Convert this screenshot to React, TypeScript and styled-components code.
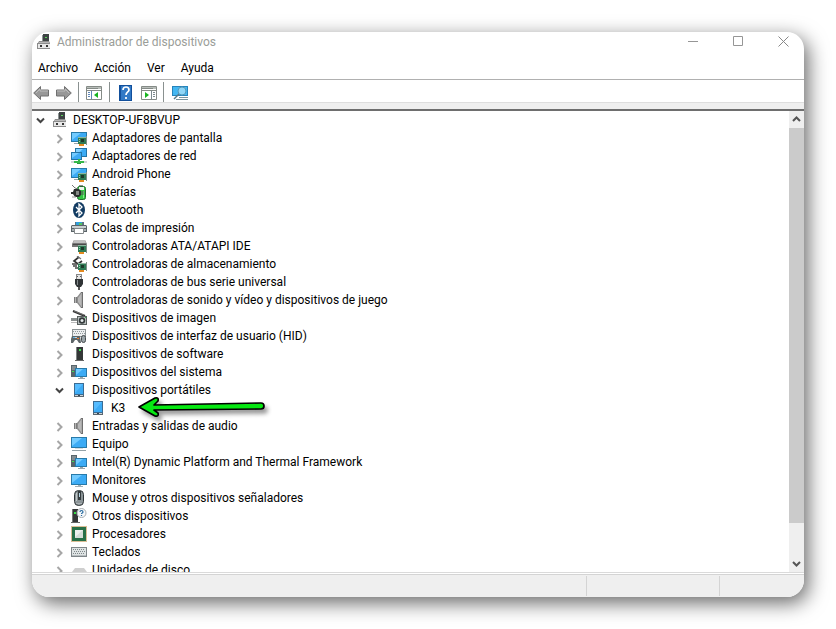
import React, { useState } from "react";
import styled, { createGlobalStyle } from "styled-components";

const GlobalStyle = createGlobalStyle`
  * { box-sizing: border-box; }
  body {
    margin: 0;
    background: #fff;
    color: #000;
    font: 12px/18px Roboto, "Noto Sans", sans-serif;
    overflow: hidden;
  }
  button {
    border: 0;
    padding: 0;
    background: none;
    color: inherit;
    font: inherit;
  }
  svg { display: block; }
`;

const Desktop = styled.div`
  height: 100vh;
  padding: 32px;
  display: flex;
`;
const Window = styled.main`
  flex: 1;
  min-width: 0;
  display: flex;
  flex-direction: column;
  background: #fff;
  border-radius: 17px;
  overflow: hidden;
  box-shadow: 4px 6px 20px rgba(0, 0, 0, 0.6);
`;
const TitleBar = styled.header`
  height: 24px;
  flex: none;
  display: flex;
  align-items: center;
  padding: 0 0 4px 4px;
`;
const Title = styled.h1`
  flex: 1;
  margin: 0 0 0 5px;
  font-size: 12px;
  font-weight: 400;
  color: #9a9d98;
`;
const CaptionButton = styled.button`
  width: 45px;
  height: 20px;
  padding-bottom: 1px;
  display: grid;
  place-items: center;
  &:last-child { width: 41px; margin-left: 2px; }
`;
const MenuBar = styled.nav`
  flex: none;
  height: 24px;
  display: flex;
  align-items: center;
  gap: 16px;
  padding-left: 6px;
  border-bottom: 1px solid #b0b0b0;
`;
const ToolBar = styled.div`
  flex: none;
  height: 23px;
  display: flex;
  align-items: center;
  padding-top: 2px;
  border-bottom: 1px solid #dedede;
`;
const ToolButton = styled.button<{ $wide: number }>`
  width: ${(p) => p.$wide}px;
  padding-top: 1px;
  display: grid;
  place-items: center;
`;
const Separator = styled.span<{ $gap?: number }>`
  width: 1px;
  height: 20px;
  margin-left: ${(p) => p.$gap ?? 0}px;
  background: #8a9190;
`;
const Strip = styled.div`
  flex: none;
  height: 8px;
  background: #efefef;
  border-bottom: 2px solid #6e6e6e;
`;
const Body = styled.section`
  flex: 1;
  min-height: 0;
  display: flex;
`;
const Tree = styled.ul`
  flex: 1;
  min-width: 0;
  margin: 0;
  padding: 0;
  list-style: none;
  overflow: hidden;
`;
const Group = styled.ul`
  margin: 0;
  padding: 0;
  list-style: none;
`;
const Row = styled.div<{ $level: number }>`
  position: relative;
  height: 18px;
  display: flex;
  align-items: center;
  padding-left: ${(p) => p.$level * 19}px;
  white-space: nowrap;
`;
const Expander = styled.button`
  width: 18px;
  height: 18px;
  margin-right: 2px;
  display: grid;
  place-items: center;
  padding-top: 2px;
`;
const ExpanderSpace = styled.span`
  width: 20px;
`;
const Label = styled.span`
  margin-left: 5px;
`;
const Pointer = styled.svg`
  position: absolute;
  left: 103px;
  top: -5px;
  z-index: 1;
  filter: drop-shadow(3px 4px 2px rgba(0, 0, 0, 0.4));
`;
const ScrollBar = styled.div`
  flex: none;
  width: 15px;
  display: flex;
  flex-direction: column;
  background: #efefef;
`;
const ScrollButton = styled.button`
  flex: none;
  height: 17px;
  display: grid;
  place-items: center;
`;
const Track = styled.div`
  flex: 1;
`;
const Thumb = styled.div`
  height: 92.5%;
  background: #cbcbcb;
`;
const StatusBar = styled.footer`
  flex: none;
  height: 25px;
  display: flex;
  padding: 1px 0;
  background: linear-gradient(#dadada 1px, #fff 1px, #fff 2px, #d4d4d4 2px, #d4d4d4 3px, #efefef 3px);
`;
const StatusCell = styled.div<{ $width?: number }>`
  flex: ${(p) => (p.$width ? `0 0 ${p.$width}px` : "1")};
  margin-top: 3px;
  border-right: 1px solid #d4d4d4;
  &:last-child { border-right: 0; }
`;

function Svg({ children }: { children: React.ReactNode }) {
  return <svg width="16" height="16" viewBox="0 0 16 16" aria-hidden="true">{children}</svg>;
}

const screen = "#3cabf5";

const Card = () => (
  <>
    <path d="M7 7h9v7H7z" fill="#2f7a55" />
    <path d="M7 7h8v1H7z" fill="#8fb5a0" />
    <path d="M15 6h1v9h-1z" fill="#7f8f88" />
    <path d="M8 14h5v2H8z" fill="#e48a20" />
    <path d="M10 9h3v3h-3z" fill="#1d3a2a" />
    <path d="M8 9h1v1H8zM8 11h1v1H8z" fill="#8fd0a8" />
  </>
);

const Speaker = () => (
  <Svg>
    <path d="M3 5h4v6H3z" fill="#7b7b7b" />
    <path d="M4 5h1v6H4z" fill="#b5b5b5" />
    <path d="M6 5l4-5h2v16h-2l-4-5z" fill="#8d8d8d" />
    <path d="M7 6l3-4v12l-3-4z" fill="#b8b8b8" />
    <path d="M10 0h2v16h-2z" fill="#6f6f6f" />
    <path d="M10 1h1v14h-1z" fill="#a9a9a9" />
  </Svg>
);
const Portable = () => (
  <Svg>
    <path d="M3 1h10v14H3z" fill="#3c6c93" />
    <path d="M4 2h8v10H4z" fill={screen} />
    <path d="M4 2h8L4 11z" fill="#56bcff" />
    <path d="M3 13h10v2H3z" fill="#5c666e" />
    <path d="M4 13h8v1H4z" fill="#c9d3d9" />
    <path d="M7 13h2v1H7z" fill="#39454f" />
  </Svg>
);
const SystemIcon = () => (
  <Svg>
    <path d="M0 1h6v12H0z" fill="#59656b" />
    <path d="M1 3h4M1 5h4" stroke="#aeb7ba" />
    <path d="M1 7h2v1H1z" fill="#3ddc54" />
    <path d="M4 4h12v9H4z" fill="#287aa9" />
    <path d="M5 5h10v7H5z" fill={screen} />
    <path d="M5 5h7l-7 6z" fill="#72cbff" />
    <path d="M9 13h3v1H9zM7 14h7v1H7z" fill="#99a5ab" />
  </Svg>
);
const DisplayCard = () => (
  <Svg>
    <path d="M0 2h16v10H0z" fill="#287aa9" />
    <path d="M1 3h14v8H1z" fill={screen} />
    <path d="M1 3h9l-9 7z" fill="#72cbff" />
    <path d="M3 13h4v1H3z" fill="#9aa5aa" />
    <Card />
  </Svg>
);

const ICONS: Record<string, () => React.JSX.Element> = {
  computer: () => (
    <Svg>
      <path d="M7 0h6v8H7z" fill="#3d4343" />
      <path d="M6 1h1v7H6z" fill="#8d9494" />
      <path d="M9 3h2v1H9z" fill="#5ed55e" />
      <path d="M3 7h10l1 2v6H1V9h1z" fill="#8c8c8c" />
      <path d="M3 8h10v1H3z" fill="#b8b8b8" />
      <path d="M2 10h12v4H2z" fill="#e8e8e8" />
      <path d="M4 11h2v2H4zM10 11h2v2h-2z" fill="#343434" />
    </Svg>
  ),
  display: DisplayCard,
  network: () => (
    <Svg>
      <path d="M4 0h12v9H4z" fill="#2475a5" />
      <path d="M5 1h10v7H5z" fill={screen} />
      <path d="M5 1h7L5 7z" fill="#83d2ff" />
      <path d="M0 4h11v8H0z" fill="#2475a5" />
      <path d="M1 5h9v6H1z" fill={screen} />
      <path d="M1 5h7l-7 5z" fill="#72cbff" />
      <path d="M7 11h2v2h4v2H3v-2h4z" fill="#35b94a" />
      <path d="M6 15h4v1H6z" fill="#2b9b3b" />
      <path d="M0 14h3m10 0h3" stroke="#a1adb1" />
    </Svg>
  ),
  battery: () => (
    <Svg>
      <path d="M8 1h4v2H8z" fill="#8b8f8b" />
      <rect x="6.5" y="2.5" width="8" height="13" rx="2" fill="#31c543" stroke="#236c2e" />
      <path d="M8 3h5v3H8z" fill="#eef3ec" />
      <path d="M12 7h1v7h-1z" fill="#85ec8d" />
      <path d="M1 1l3 3 3 1" fill="none" stroke="#777" />
      <path d="M3 5h5l2 2v4l-2 2H4l-2-3H0V8h2z" fill="#2b302d" />
      <path d="M5 7h3v4H5z" fill="#858985" />
      <path d="M10 8h3M10 10h3" stroke="#555" />
      <path d="M1 13h4" stroke="#999" />
    </Svg>
  ),
  bluetooth: () => (
    <Svg>
      <ellipse cx="8" cy="8" rx="6" ry="8" fill="#123b62" />
      <path d="M5 5l6 6-3 3V2l3 3-6 6" fill="none" stroke="#fff" strokeWidth="1.3" />
    </Svg>
  ),
  printer: () => (
    <Svg>
      <path d="M4 2h9v3H4z" fill="#5e7480" />
      <path d="M5 2h6v3H5z" fill="#319fdc" />
      <path d="M8 3h3v2H8z" fill="#55c560" />
      <path d="M1 5h14l1 1v6H0V6z" fill="#5b6468" />
      <path d="M1 6h14v2H1z" fill="#c9cfd1" />
      <path d="M1 9h2v2H1zM13 9h2v2h-2z" fill="#a9afb1" />
      <path d="M3.5 8.5h9v5h-9z" fill="#fff" stroke="#84898b" />
    </Svg>
  ),
  ata: () => (
    <Svg>
      <path d="M3 2h11l2 4v3H1V6z" fill="#777" />
      <path d="M3 2h11l1 3H2z" fill="#c0c0c0" />
      <path d="M2 6h13v1H2z" fill="#4a4a4a" />
      <Card />
    </Svg>
  ),
  storage: () => (
    <Svg>
      <path d="M8 1L3 5l4 3 4-3" fill="none" stroke="#333" strokeWidth="1.7" />
      <path d="M6 0l4 3" stroke="#777" strokeWidth="1.3" />
      <path d="M1 8h5M2 10h4M4 12h3" stroke="#444" strokeWidth="1.4" />
      <Card />
    </Svg>
  ),
  usb: () => (
    <Svg>
      <path d="M5 0h6v5H5z" fill="#888" />
      <path d="M6 1h4v4H6z" fill="#e5e5e5" />
      <path d="M6 2h1v1H6zM9 2h1v1H9z" fill="#555" />
      <path d="M4 5h8v5l-2 3H6l-2-3z" fill="#303436" />
      <path d="M6 6h1v5H6z" fill="#82888a" />
      <path d="M7 13h2v3H7z" fill="#555" />
    </Svg>
  ),
  speaker: Speaker,
  imaging: () => (
    <Svg>
      <path d="M2 1l12 5" stroke="#333" strokeWidth="2" />
      <path d="M3 1l10 4" stroke="#999" strokeWidth=".6" />
      <path d="M0 8h7v3H0z" fill="#8a8f8f" />
      <path d="M6 6h10v9H6z" fill="#59605f" />
      <path d="M7 7h8v7H7z" fill="#b6bdbd" />
      <circle cx="11" cy="10.5" r="3.2" fill="#343a3b" />
      <circle cx="11" cy="10.5" r="1.5" fill="#e1e7e9" />
      <path d="M0 12.5h6" stroke="#bbb" />
      <path d="M14 7h1v1h-1z" fill="#37b84e" />
    </Svg>
  ),
  hid: () => (
    <Svg>
      <path d="M1 1h14v8H1z" fill="#8d9496" />
      <path d="M2 2h12v6H2z" fill="#eceeef" />
      <path d="M2 3.5h12M3 5.5h11" stroke="#929a9d" strokeDasharray="1 1" />
      <path d="M1 8h8l1 7H8l-2-3H4l-2 3H0v-4z" fill="#5d6568" />
      <rect x="10.5" y="7.5" width="4" height="7" rx="2" fill="#9aa4a8" stroke="#454b4e" />
      <path d="M2 9h2v1H2z" fill="#5ab4e7" />
      <path d="M4 9h2v1H4z" fill="#c7d5dc" />
      <path d="M6 10h2v1H6z" fill="#e9792d" />
    </Svg>
  ),
  software: () => (
    <Svg>
      <path d="M5 1h7v13H5z" fill="#343737" />
      <path d="M5 1h1v13H5z" fill="#7c8282" />
      <path d="M8 3h2v2H8z" fill="#3ee052" />
      <path d="M4 14h9v1H4z" fill="#666" />
    </Svg>
  ),
  system: SystemIcon,
  portable: Portable,
  pc: () => (
    <Svg>
      <path d="M0 1h16v11H0z" fill="#287aa9" />
      <path d="M1 2h14v9H1z" fill={screen} />
      <path d="M1 2h10l-10 8z" fill="#72cbff" />
      <path d="M4 12h8v1H4z" fill="#d5dcdf" />
      <path d="M1 14h14v1H1z" fill="#94a2a8" />
    </Svg>
  ),
  monitor: () => (
    <Svg>
      <path d="M0 2h16v11H0z" fill="#287aa9" />
      <path d="M1 3h14v9H1z" fill={screen} />
      <path d="M1 3h10l-10 8z" fill="#72cbff" />
      <path d="M7 13h3v1H7zM4 14h8v1H4z" fill="#a4b0b5" />
    </Svg>
  ),
  mouse: () => (
    <Svg>
      <rect x="3.5" y=".5" width="9" height="15" rx="4" fill="#8b9497" stroke="#303639" />
      <path d="M5 3h1v8H5z" fill="#c1c8ca" />
      <path d="M7 1h3v9H7z" fill="#343b3e" />
      <path d="M8 3h1v4H8z" fill="#b9d6e3" />
      <path d="M5 13h6v1H5z" fill="#abb2b5" />
    </Svg>
  ),
  other: () => (
    <Svg>
      <path d="M1 1h6v14H1z" fill="#343737" />
      <path d="M1 1h1v14H1z" fill="#777" />
      <path d="M3 4h2v2H3z" fill="#35dc45" />
      <path d="M0 14h9v1H0z" fill="#666" />
      <circle cx="10.5" cy="5" r="4.5" fill="#f6f8fa" stroke="#a8adb1" />
      <path d="M9 4c0-2 3-2 3 0 0 1-1.5 1-1.5 2m0 1v1" fill="none" stroke="#26699d" strokeWidth="1.2" />
    </Svg>
  ),
  cpu: () => (
    <Svg>
      <path d="M.5.5h15v15H.5z" fill="none" stroke="#b67d2c" strokeDasharray="1 1" />
      <path d="M1 1h14v14H1z" fill="#287047" />
      <path d="M4 4h8v8H4z" fill="#d5ddd7" />
      <path d="M4 4h8l-8 7z" fill="#eef1ed" />
    </Svg>
  ),
  keyboard: () => (
    <Svg>
      <path d="M0 3h16v10H0z" fill="#7f8689" />
      <path d="M1 4h14v7H1z" fill="#dfe4e4" />
      <path d="M2 5.5h12M3 7.5h11M2 9.5h12" stroke="#7f878a" strokeDasharray="1 1" />
      <path d="M1 11h14v1H1z" fill="#b7bdbf" />
    </Svg>
  ),
  disk: () => (
    <Svg>
      <path d="M4 6h9l3 4v4H1v-4z" fill="#cfcfcf" />
    </Svg>
  ),
};

type Device = { name: string; icon: string; children?: Device[] };

const DEVICES: Device[] = [
  { name: "Adaptadores de pantalla", icon: "display" },
  { name: "Adaptadores de red", icon: "network" },
  { name: "Android Phone", icon: "display" },
  { name: "Baterías", icon: "battery" },
  { name: "Bluetooth", icon: "bluetooth" },
  { name: "Colas de impresión", icon: "printer" },
  { name: "Controladoras ATA/ATAPI IDE", icon: "ata" },
  { name: "Controladoras de almacenamiento", icon: "storage" },
  { name: "Controladoras de bus serie universal", icon: "usb" },
  { name: "Controladoras de sonido y vídeo y dispositivos de juego", icon: "speaker" },
  { name: "Dispositivos de imagen", icon: "imaging" },
  { name: "Dispositivos de interfaz de usuario (HID)", icon: "hid" },
  { name: "Dispositivos de software", icon: "software" },
  { name: "Dispositivos del sistema", icon: "system" },
  { name: "Dispositivos portátiles", icon: "portable", children: [{ name: "K3", icon: "portable" }] },
  { name: "Entradas y salidas de audio", icon: "speaker" },
  { name: "Equipo", icon: "pc" },
  { name: "Intel(R) Dynamic Platform and Thermal Framework", icon: "system" },
  { name: "Monitores", icon: "monitor" },
  { name: "Mouse y otros dispositivos señaladores", icon: "mouse" },
  { name: "Otros dispositivos", icon: "other" },
  { name: "Procesadores", icon: "cpu" },
  { name: "Teclados", icon: "keyboard" },
  { name: "Unidades de disco", icon: "disk" },
];

function Chevron({ open }: { open: boolean }) {
  return (
    <svg width="10" height="10" viewBox="0 0 10 10" fill="none" strokeWidth="2" aria-hidden="true">
      {open ? <path d="M1 2.5l3.5 3.5L8 2.5" stroke="#444" /> : <path d="M2.5 1l4 4-4 4" stroke="#a6a6a6" />}
    </svg>
  );
}

function GreenArrow() {
  return (
    <Pointer width="136" height="24" viewBox="0 0 136 24" aria-hidden="true">
      <path
        d="M4 13L20 4q4-1 3 3l-4 4 107-2q3 0 3 3t-3 3L19 16l4 3q1 4-3 3z"
        fill="#06e812"
        stroke="#000"
        strokeWidth="1.7"
        strokeLinejoin="round"
      />
    </Pointer>
  );
}

function DeviceItem({ device, level }: { device: Device; level: number }) {
  const [open, setOpen] = useState(Boolean(device.children));
  const Icon = ICONS[device.icon];
  const leaf = level === 2;
  return (
    <li>
      <Row $level={level}>
        {leaf ? (
          <ExpanderSpace />
        ) : (
          <Expander aria-label={device.name} aria-expanded={open} onClick={() => setOpen(!open)}>
            <Chevron open={open} />
          </Expander>
        )}
        <Icon />
        <Label>{device.name}</Label>
        {leaf && <GreenArrow />}
      </Row>
      {open && device.children && (
        <Group>
          {device.children.map((child) => (
            <DeviceItem key={child.name} device={child} level={level + 1} />
          ))}
        </Group>
      )}
    </li>
  );
}

function ArrowIcon({ back }: { back?: boolean }) {
  return (
    <Svg>
      <path
        d={back ? "M.7 8L7.5 1.5V5h8v6h-8v3.5z" : "M15.3 8L8.5 1.5V5h-8v6h8v3.5z"}
        fill="#989898"
        stroke="#707070"
      />
      <path d={back ? "M3 8l4-4v2h8" : "M1 6h8V4l4 4"} fill="none" stroke="#bdbdbd" />
    </Svg>
  );
}

function PaneIcon({ right }: { right?: boolean }) {
  return (
    <svg width="16" height="14" viewBox="0 0 16 14" aria-hidden="true">
      <path d="M.5.5h15v13H.5z" fill="#fff" stroke="#858b87" />
      <path d="M1 1h14v2H1z" fill="#b8bdb9" />
      <path d="M1 4.5h14M1 2.5h11" stroke="#858b87" />
      <path
        d={right ? "M10.5 5v8M12 6.5h2m-2 2h2m-2 2h2" : "M5.5 5v8M2 6.5h2M2 8.5h2m-2 2h2"}
        stroke={right ? "#7d8a8e" : "#5f86b8"}
      />
      <path d={right ? "M4 6l4 3-4 3z" : "M12 6L8 9l4 3z"} fill="#17b41f" />
    </svg>
  );
}

function ScrollArrow({ up }: { up?: boolean }) {
  return (
    <svg width="9" height="9" viewBox="0 0 9 9" fill="none" aria-hidden="true">
      <path d={up ? "M1 6l3.5-3.5L8 6" : "M1 3l3.5 3.5L8 3"} stroke="#555" strokeWidth="2" />
    </svg>
  );
}

export default function App() {
  const Computer = ICONS.computer;
  return (
    <>
      <GlobalStyle />
      <Desktop>
        <Window>
          <TitleBar>
            <Computer />
            <Title>Administrador de dispositivos</Title>
            <CaptionButton aria-label="Minimizar">
              <svg width="11" height="11"><path d="M0 5.5h10" stroke="#969696" /></svg>
            </CaptionButton>
            <CaptionButton aria-label="Maximizar">
              <svg width="11" height="11"><path d="M.5.5h9v9h-9z" fill="none" stroke="#969696" /></svg>
            </CaptionButton>
            <CaptionButton aria-label="Cerrar">
              <svg width="11" height="11"><path d="M.5.5l10 10m0-10l-10 10" stroke="#888" /></svg>
            </CaptionButton>
          </TitleBar>
          <MenuBar>
            {["Archivo", "Acción", "Ver", "Ayuda"].map((item) => (
              <button key={item}>{item}</button>
            ))}
          </MenuBar>
          <ToolBar>
            <ToolButton $wide={18} aria-label="Atrás"><ArrowIcon back /></ToolButton>
            <ToolButton $wide={28} aria-label="Adelante"><ArrowIcon /></ToolButton>
            <Separator />
            <ToolButton $wide={30} aria-label="Mostrar u ocultar árbol"><PaneIcon /></ToolButton>
            <Separator />
            <ToolButton $wide={30} aria-label="Ayuda">
              <svg width="13" height="16" viewBox="0 0 13 16">
                <path d="M0 0h13v16H0z" fill="#124f9b" />
                <path d="M2 1h10v14H2z" fill="#3179c6" />
                <path d="M4 5c0-4 6-4 6 0 0 2-3 2-3 5m0 2v2" fill="none" stroke="#fff" strokeWidth="1.7" />
              </svg>
            </ToolButton>
            <ToolButton $wide={18} aria-label="Mostrar u ocultar panel de acciones"><PaneIcon right /></ToolButton>
            <Separator $gap={5} />
            <ToolButton $wide={32} aria-label="Buscar cambios de hardware">
              <svg width="17" height="16" viewBox="0 0 17 16">
                <path d="M0 1h16v10H0z" fill="#2784bb" />
                <path d="M1 2h14v8H1z" fill="#43b7f2" />
                <path d="M7 12h9v1H7zM4 14h12v1H4z" fill="#7c969f" />
                <circle cx="10" cy="6" r="4" fill="#8fd6f7" stroke="#5499b9" />
                <path d="M7 9l-5 5" stroke="#557a8b" strokeWidth="1.5" />
              </svg>
            </ToolButton>
          </ToolBar>
          <Strip />
          <Body>
            <Tree>
              <DeviceItem device={{ name: "DESKTOP-UF8BVUP", icon: "computer", children: DEVICES }} level={0} />
            </Tree>
            <ScrollBar>
              <ScrollButton aria-label="Desplazar hacia arriba"><ScrollArrow up /></ScrollButton>
              <Track><Thumb /></Track>
              <ScrollButton aria-label="Desplazar hacia abajo"><ScrollArrow /></ScrollButton>
            </ScrollBar>
          </Body>
          <StatusBar>
            <StatusCell />
            <StatusCell $width={133} />
            <StatusCell $width={84} />
          </StatusBar>
        </Window>
      </Desktop>
    </>
  );
}
